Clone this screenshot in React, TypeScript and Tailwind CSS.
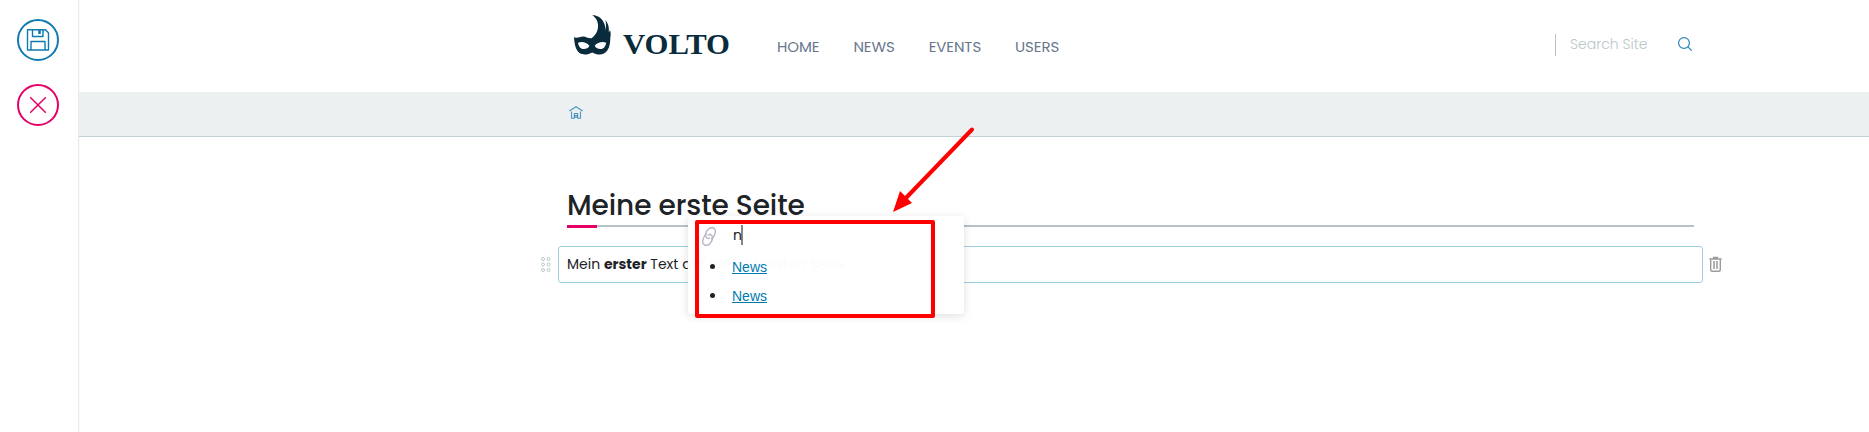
import React from "react";

const geo = "font-['Poppins','Inter',sans-serif] [font-feature-settings:'cv11','ss03']";

function SaveIcon() {
  return (
    <svg width="42" height="42" viewBox="0 0 42 42" fill="none" stroke="#0f7bb0">
      <circle cx="21" cy="21" r="20" strokeWidth="2" />
      <path d="M10.5 10.8h18l3 3.2v17h-21z M15.5 11v6.5h10.5V11 M14 31v-8.5h14V31" strokeWidth="1.4" strokeLinejoin="round" />
      <path d="M22.5 11v4" strokeWidth="2.6" />
    </svg>
  );
}

function CancelIcon() {
  return (
    <svg width="42" height="42" viewBox="0 0 42 42" fill="none" stroke="#e40166">
      <circle cx="21" cy="21" r="20" strokeWidth="2" />
      <path d="M13.2 13.3l15.6 15.4M28.8 13.3L13.2 28.7" strokeWidth="1.5" />
    </svg>
  );
}

function Logo() {
  return (
    <svg width="160" height="44" viewBox="0 0 160 44" fill="#092b3b">
      <path
        fillRule="evenodd"
        d="M18.300 0C24 .5 28 3 30 8C31.200 11 31.600 13 31.300 16C32.300 12 32.200 8 31.400 5C34 8 35.300 12 34.800 17C35.600 16.500 35.900 15.500 35.900 14.500C37 18 36.800 20 36.300 23C36.300 30 34.500 36 30.300 38.300C26.500 40.500 22 39.500 18.200 37.400C14 39.700 9.500 40.300 5.500 38C1.500 35 .3 28 0 22C3 24 5.500 21.700 8.700 21.500C12 21.300 14 23.700 17.500 23.200C22 20 24.500 15 24 9.500C23.500 5 21.500 2.500 18.300 0ZM4 27.700C5 32.500 7 34 9.800 34C12.300 34 14.500 33 15.400 30.800C12.500 27.500 8.500 26.300 4 27.700ZM20.700 30.800C21.700 33 24 34 26.400 34C29 34 31.300 32.500 32.200 27.700C28 26.300 23.500 27.500 20.700 30.800Z"
      />
      <text x="49" y="38.800" textLength="107" lengthAdjust="spacingAndGlyphs" fontFamily="Liberation Serif, serif" fontWeight="700" fontSize="30">VOLTO</text>
    </svg>
  );
}

function SearchIcon() {
  return (
    <svg width="14" height="14" viewBox="0 0 14 14" fill="none" stroke="#2a84b7" strokeWidth="1.2">
      <circle cx="6" cy="6" r="5.400" />
      <path d="M9.700 9.700l4 4" />
    </svg>
  );
}

function HomeIcon() {
  return (
    <svg width="14" height="13" viewBox="0 0 14 13" fill="none" stroke="#4c96c0" strokeWidth="1.1">
      <path d="M.4 5L7 .7 13.600 5M2.500 5.500v6.700h2.800V7.500h3.400v4.700h2.800V5.500M6.200 12V9.500h1.600V12" />
    </svg>
  );
}

function DragIcon() {
  return (
    <svg width="10" height="15" viewBox="0 0 10 15" fill="none" stroke="#b8c6c8" strokeWidth="1">
      {[2, 7.5, 13].map((y) => (
        <React.Fragment key={y}>
          <circle cx="2" cy={y} r="1.500" />
          <circle cx="7.500" cy={y} r="1.500" />
        </React.Fragment>
      ))}
    </svg>
  );
}

function TrashIcon() {
  return (
    <svg width="13" height="16" viewBox="0 0 13 16" fill="none" stroke="#9b9b9b">
      <path d="M.3 3h12.400M4.500 2.500V1.500h4v1" strokeWidth="1.3" />
      <path d="M1.700 3.500v10.200q0 1.500 1.500 1.500h6.600q1.500 0 1.500-1.500V3.500" strokeWidth="1.4" />
      <path d="M5 5v8M8 5v8" strokeWidth="1.500" />
    </svg>
  );
}

function LinkIcon() {
  return (
    <svg width="14" height="19" viewBox="0 0 14 19" fill="none" stroke="#b9b5cb" strokeWidth="1.4">
      <path d="M9.200 12.300C11.200 11.500 12.100 9 12.900 6.800C14 3.600 13 1.300 10.600.8C7.900.2 6 1.700 4.600 4.300C3.200 6.900 3 9 4.600 10.700C5.600 11.700 7.300 11.700 8.300 10.600" />
      <path d="M4.800 6.700C2.800 7.500 1.900 10 1.100 12.200C0 15.400 1 17.700 3.400 18.200C6.100 18.800 8 17.300 9.400 14.700C10.800 12.100 11 10 9.400 8.300C8.400 7.300 6.700 7.300 5.700 8.400" />
    </svg>
  );
}

const nav = ["HOME", "NEWS", "EVENTS", "USERS"];

export default function App() {
  return (
    <div className={`relative flex h-[432px] w-[1869px] overflow-hidden bg-white text-[#1d2326] ${geo}`}>
      <aside className="flex w-[79px] flex-none flex-col gap-[23px] border-r border-[#e9ebec] pl-[17px] pt-[19px] shadow-[0_0_2px_rgba(0,0,0,0.08)]">
        <button className="h-[42px] w-[42px]"><SaveIcon /></button>
        <button className="h-[42px] w-[42px]"><CancelIcon /></button>
      </aside>
      <div className="flex min-w-0 flex-1 flex-col">
        <header className="flex h-[92px] flex-none items-start pl-[495px]">
          <div className="w-[203px] pt-[15px]"><Logo /></div>
          <nav className="flex flex-1 gap-[34px] pt-[37px] text-[15px] leading-5 tracking-[-0.1px] text-[#68778d]">
            {nav.map((n) => (
              <a key={n}>{n}</a>
            ))}
          </nav>
          <div className="mr-[177px] mt-[34px] flex h-[22px] w-[137px] items-center border-l border-[#b5c3c6] pl-[14px]">
            <span className="-mt-[2px] flex-1 whitespace-nowrap text-[14px] font-light leading-5 text-[#b8c6c8]">Search Site</span>
            <span className="-mt-[3px]"><SearchIcon /></span>
          </div>
        </header>
        <div className="flex h-[45px] flex-none items-start border-b border-[#c4d0d3] bg-[#ecf0f1] pl-[490px] pt-[14px]">
          <HomeIcon />
        </div>
        <main className="pt-[49px]">
          <div className="ml-[488px] w-[1127px]">
            <h1 className="h-[39px] whitespace-nowrap text-[28px] font-medium leading-[39px] tracking-[-0.1px]">Meine erste Seite</h1>
            <div className="h-[3px]">
              <div className="h-[2px] bg-[#b5c3c6]"><div className="h-[3px] w-[30px] bg-[#e40166]" /></div>
            </div>
          </div>
          <div className="mt-[18px] flex items-center pl-[462px]">
            <DragIcon />
            <div className="ml-[7px] h-[37px] w-[1145px] whitespace-pre rounded-[3px] border border-[#9bcfe0] pl-[8px] text-[14px] leading-[34px]">
              Mein <b className="font-bold">erster</b> Text auf meiner ersten Seite.
            </div>
            <span className="-mt-px ml-[6px]"><TrashIcon /></span>
          </div>
        </main>
      </div>

      <div className="absolute left-[688px] top-[216px] h-[98px] w-[276px] rounded-[3px] bg-white/[0.98] shadow-[0_2px_10px_rgba(0,0,0,0.13)]">
        <div className="flex items-start pl-[14px] pt-[11px]">
          <LinkIcon />
          <span className="-mt-[2px] ml-[17px] flex h-5 w-[10px] items-center border-r-2 border-[#858585] text-[14px] leading-[19px]">n</span>
        </div>
        <ul className="list-none pl-[22px] pt-[6px] font-['Liberation_Sans',Arial,sans-serif] text-[14px] text-[#007bb1]">
          {[0, 1].map((i) => (
            <li key={i} className="flex h-[29px] items-center">
              <span className="h-[5px] w-[5px] rounded-full bg-[#1d2326]" />
              <a className="ml-[17px] pt-[2px] underline">News</a>
            </li>
          ))}
        </ul>
      </div>
      <div className="absolute left-[695px] top-[220px] h-[98px] w-[240px] rounded-[2px] border-4 border-[#ff0000]" />
      <svg className="absolute left-[888px] top-[122px]" width="92" height="94" viewBox="0 0 92 94">
        <path d="M84 7.500L16 78" stroke="#f00" strokeWidth="4" strokeLinecap="round" />
        <path d="M5 90L12 69L24 81Z" fill="#f00" />
      </svg>
    </div>
  );
}
